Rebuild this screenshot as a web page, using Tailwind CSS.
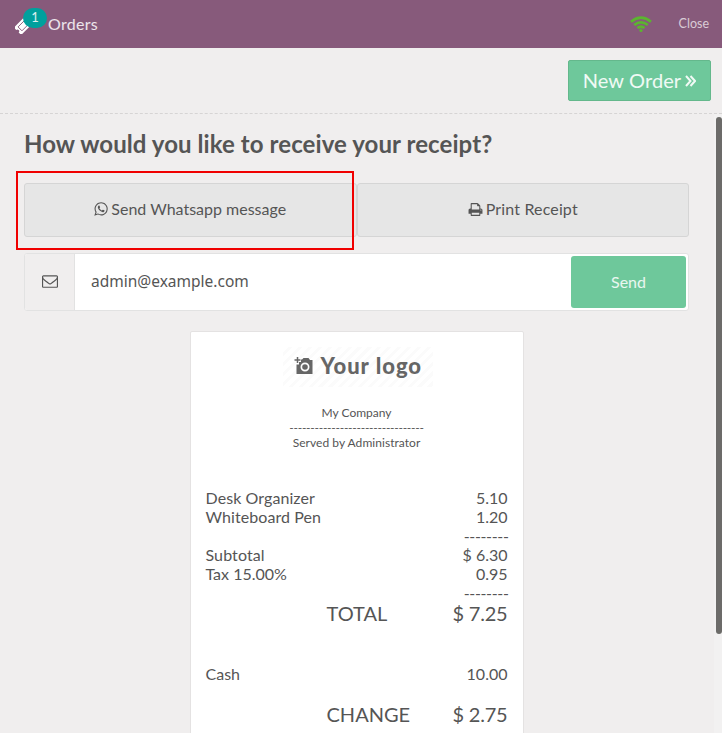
<!DOCTYPE html>
<html lang="en">
<head>
<meta charset="utf-8">
<title>Orders</title>
<script src="https://cdn.jsdelivr.net/npm/@tailwindcss/browser@4"></script>
</head>
<body class="relative h-[733px] w-[722px] overflow-hidden bg-[#f0eeee] font-['Lato',sans-serif] text-[16px] text-[#555555]">
<header class="flex h-12 items-center bg-[#875a7b] text-white/85">
  <div class="relative ml-[15px] w-[33px] h-8">
    <svg class="absolute left-0 top-[9px]" width="17" height="17" viewBox="0 0 17 17">
      <g transform="rotate(-45 8 8.5)"><path fill="#fff" d="M0 3.500h16v3.500a1.700 1.700 0 0 0 0 3.400v3.500H0v-3.500a1.700 1.700 0 0 0 0-3.400z"/><path fill="none" stroke="#875a7b" stroke-width=".9" d="M3.500 6h9v5.500h-9z"/></g>
    </svg>
    <span class="absolute left-[8px] top-0 flex h-5 w-[24px] items-center justify-center rounded-[10px] bg-[#00a09d] text-[13px] text-white/85">1</span>
  </div>
  <span class="text-[16px] tracking-[0.3px]">Orders</span>
  <svg class="ml-auto" width="22" height="18" viewBox="0 0 22 18" fill="none" stroke="#5bb52f" stroke-width="2.700">
    <path d="M1 6.700Q11-1.300 21 6.700M4.200 10Q11 4.700 17.800 10M7.400 13Q11 10.500 14.600 13"/><circle cx="11" cy="15.500" r="1.600" fill="#5bb52f" stroke="none"/>
  </svg>
  <span class="ml-[27px] mr-[13px] text-[12.500px] text-white/70">Close</span>
</header>
<div class="flex h-[66px] items-start justify-end border-b border-dashed border-[#d6d4d4] pr-[11px] pt-3">
  <button class="flex h-[41px] w-[143px] items-center justify-center gap-[4px] whitespace-nowrap rounded-[2px] border border-[#64b88c] bg-[#6ec89b] pb-[2px] text-[20px] tracking-[0.1px] text-white/90">New Order
    <svg class="mt-[2px]" width="11" height="12" viewBox="0 0 11 12" fill="none" stroke="currentColor" stroke-width="2"><path d="M1 1l4.500 5L1 11M5.500 1L10 6l-4.500 5"/></svg>
  </button>
</div>
<main class="px-6 pr-[33px] pt-[14px]">
  <h1 class="h-8 whitespace-nowrap text-[24px] font-bold leading-8 tracking-[0.08px]">How would you like to receive your receipt?</h1>
  <div class="mt-[23px] flex h-[54px]">
    <button class="flex w-[333px] items-center justify-center gap-[3px] rounded-[3px] border border-[#d5d5d5] bg-[#e6e6e6] pb-[2px]">
      <svg width="14" height="14" viewBox="128 96 1536 1600" fill="currentColor"><path d="M1113 974q13 0 97.500 44t89.500 53q2 5 2 15 0 33-17 76-16 39-71 65.500t-102 26.500q-57 0-190-62-98-45-170-118t-148-185q-72-107-71-194v-8q3-91 74-158 24-22 52-22 6 0 18 1.500t19 1.500q19 0 26.500 6.500t15.500 27.500q8 20 33 88t25 75q0 21-34.500 57.500t-34.500 46.500q0 7 5 15 34 73 102 137 56 53 151 101 12 7 22 7 15 0 54-48.500t52-48.500zm-203 530q127 0 243.500-50t200.500-134 134-200.500 50-243.500-50-243.500-134-200.500-200.500-134-243.500-50-243.500 50-200.500 134-134 200.500-50 243.500q0 203 120 368l-79 233 242-77q158 104 345 104zm0-1382q153 0 292.500 60t240.500 161 161 240.500 60 292.500-60 292.500-161 240.500-240.500 161-292.500 60q-195 0-365-94l-417 134 136-405q-108-178-108-389 0-153 60-292.500t161-240.500 240.500-161 292.500-60z"/></svg>Send Whatsapp message
    </button>
    <button class="flex w-[333px] items-center justify-center gap-[3px] rounded-[3px] border border-[#d5d5d5] bg-[#e6e6e6] pb-[2px]">
      <svg width="15" height="15" viewBox="0 0 1792 1792" fill="currentColor"><path d="M448 1536h896v-256h-896v256zm0-640h896v-384h-160q-40 0-68-28t-28-68v-160h-640v640zm1152 64q0-26-19-45t-45-19-45 19-19 45 19 45 45 19 45-19 19-45zm128 0v416q0 13-9.500 22.500t-22.500 9.500h-224v160q0 40-28 68t-68 28h-960q-40 0-68-28t-28-68v-160h-224q-13 0-22.500-9.500t-9.500-22.500v-416q0-79 56.500-135.500t135.500-56.500h64v-544q0-40 28-68t68-28h672q40 0 88 20t76 48l152 152q28 28 48 76t20 88v256h64q79 0 135.500 56.500t56.500 135.500z"/></svg><span class="tracking-[0.15px]">Print Receipt</span>
    </button>
  </div>
  <div class="mt-[16px] flex h-[58px] overflow-hidden rounded-[3px] border border-[#e2e2e2] bg-white">
    <div class="flex w-[50px] items-center justify-center border-r border-[#e2e2e2] bg-[#f0eeee] pb-[3px]">
      <svg width="16" height="16" viewBox="0 0 1792 1792" fill="currentColor"><path d="M1664 1504v-768q-32 36-69 66-268 206-426 338-51 43-83 67t-86.500 48.500-102.500 24.500h-2q-48 0-102.500-24.500t-86.500-48.500-83-67q-158-132-426-338-37-30-69-66v768q0 13 9.500 22.500t22.500 9.500h1472q13 0 22.500-9.500t9.500-22.500zm0-1051v-24.500l-.5-13-3-12.500-5.500-9-9-7.500-14-2.500h-1472q-13 0-22.500 9.500t-9.500 22.500q0 168 147 284 193 152 401 317 6 5 35 29.500t46 37.500 44.500 31.500 50.500 27.500 43 9h2q20 0 43-9t50.500-27.500 44.500-31.500 46-37.500 35-29.500q208-165 401-317 54-43 100.500-115.500t46.500-131.500zm128-37v1088q0 66-47 113t-113 47h-1472q-66 0-113-47t-47-113v-1088q0-66 47-113t113-47h1472q66 0 113 47t47 113z"/></svg>
    </div>
    <span class="flex flex-1 items-center pl-4 font-['Noto_Sans',sans-serif] text-[15.500px]">admin@example.com</span>
    <button class="m-[2px] flex h-[52px] w-[115px] items-center justify-center rounded-[3px] bg-[#6ec89b] text-white/85">Send</button>
  </div>
  <section class="ml-[166px] mt-[20px] h-[430px] w-[334px] rounded-[2px] border border-[#e4e2e2] bg-white pl-[14.500px] pr-[15.500px] pt-[15px]">
    <div class="ml-[77px] flex h-[40px] w-[150px] items-center gap-[8px] bg-[repeating-linear-gradient(135deg,#ffffff_0px,#ffffff_4px,#fbfbfb_4px,#fbfbfb_7px)] pb-[3px] pl-[11px] text-[#666666]">
      <svg class="shrink-0" width="19" height="18" viewBox="0 0 19 18"><path fill="currentColor" fill-rule="evenodd" d="M7 2.500h1L9.500 1h5L16 3h2.500v14H2.500V7.500H5V5h2zM11 5.500a4.500 4.500 0 1 0 0 9 4.500 4.500 0 0 0 0-9zm0 1.700a2.800 2.800 0 1 1 0 5.600 2.800 2.800 0 0 1 0-5.600z"/><path d="M3.500 0v6M.5 3h6" stroke="currentColor" stroke-width="1.500"/></svg>
      <span class="whitespace-nowrap text-[22px] font-black tracking-[1px]">Your logo</span>
    </div>
    <div class="mt-[18px] text-center text-[12px] leading-[15px]">
      <div>My Company</div>
      <div class="whitespace-nowrap tracking-[-0.260px]">--------------------------------</div>
      <div class="tracking-[0.05px]">Served by Administrator</div>
    </div>
    <div class="mt-[38px] leading-[19px]">
      <div class="flex justify-between"><span class="tracking-[0.08px]">Desk Organizer</span><span>5.10</span></div>
      <div class="flex justify-between"><span class="tracking-[0.08px]">Whiteboard Pen</span><span>1.20</span></div>
      <div class="-mr-[1px] text-right tracking-[-0.350px]">--------</div>
      <div class="flex justify-between"><span class="tracking-[0.1px]">Subtotal</span><span>$ 6.30</span></div>
      <div class="flex justify-between"><span>Tax 15.00%</span><span>0.95</span></div>
      <div class="-mr-[1px] text-right tracking-[-0.350px]">--------</div>
      <div class="-mt-[1px] flex justify-between pl-[121px] text-[20px] leading-6"><span>TOTAL</span><span class="tracking-[-0.2px]">$ 7.25</span></div>
      <div class="mt-[39px] flex justify-between"><span>Cash</span><span>10.00</span></div>
      <div class="mt-[19px] flex justify-between pl-[121px] text-[20px] leading-6"><span>CHANGE</span><span class="tracking-[-0.2px]">$ 2.75</span></div>
    </div>
  </section>
</main>
<div class="absolute left-[16px] top-[171px] h-[79px] w-[338px] border-2 border-[#f00000]"></div>
<div class="absolute right-0 top-[114px] h-[619px] w-[8px] bg-[#f2f1f1] pl-[2px] pt-[3px]"><div class="h-[517px] w-[6px] rounded-[3px] bg-[#6c6b69]"></div></div>
</body>
</html>
